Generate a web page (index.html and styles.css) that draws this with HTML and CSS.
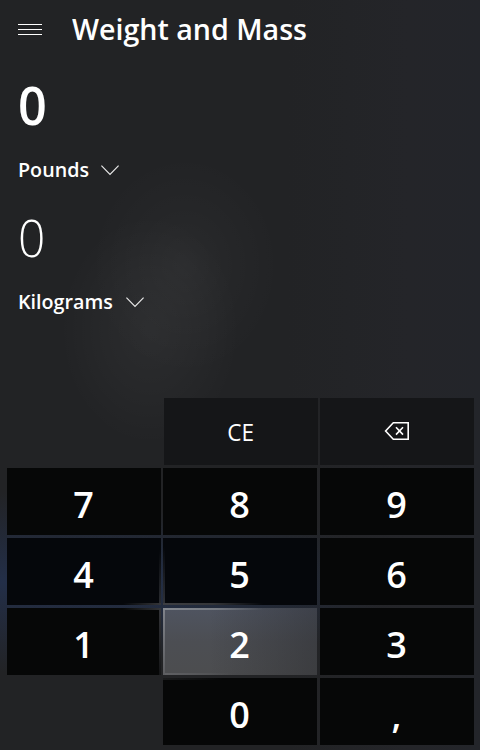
FILE: index.html
```html
<!DOCTYPE html>
<html lang="en">
<head>
<meta charset="utf-8">
<title>Calculator</title>
<link rel="stylesheet" href="styles.css">
</head>
<body>
<main class="converter">
  <header class="header">
    <svg class="menu" width="24" height="12" viewBox="0 0 24 12" shape-rendering="crispEdges"><path d="M0 .5h24M0 5.5h24M0 10.5h24"/></svg>
    <h1 class="title"><span class="fit">Weight and Mass</span></h1>
  </header>
  <section class="fields">
    <div class="value value-active"><span class="fit">0</span></div>
    <div class="unit"><span class="unit-name pounds"><span class="fit">Pounds</span></span><svg class="chevron" width="18" height="11" viewBox="0 0 18 11"><path d="M.4 .6L9 9.4L17.6 .6"/></svg></div>
    <div class="value value-light"><span class="fit">0</span></div>
    <div class="unit"><span class="unit-name kilograms"><span class="fit">Kilograms</span></span><svg class="chevron" width="18" height="11" viewBox="0 0 18 11"><path d="M.4 .6L9 9.4L17.6 .6"/></svg></div>
  </section>
  <section class="keypad">
    <div class="row tools">
      <button class="key tool"><span class="fit">CE</span></button>
      <button class="key tool back"><svg class="backspace" width="26" height="20" viewBox="0 0 26 20"><path d="M9.3 1.8H24.2V18.2H9.3L1.6 10Z"/><path d="M12 6.2L19 13.6M19 6.2L12 13.6"/></svg></button>
    </div>
    <div class="row"><button class="key">7</button><button class="key">8</button><button class="key">9</button></div>
    <div class="row"><button class="key blue glow-four">4</button><button class="key blue glow-five">5</button><button class="key">6</button></div>
    <div class="row"><button class="key glow-one">1</button><button class="key hover">2</button><button class="key">3</button></div>
    <div class="row last"><button class="key glow-zero">0</button><button class="key">,</button></div>
  </section>
</main>
</body>
</html>
```
FILE: styles.css
```css
* { box-sizing: border-box; }
body {
  margin: 0;
  color: #fff;
  font-family: "Open Sans", "Noto Sans", sans-serif;
  font-weight: 600;
}
.converter {
  width: 480px;
  height: 750px;
  display: flex;
  flex-direction: column;
  overflow: hidden;
  background:
    radial-gradient(ellipse 95px 110px at 185px 265px, rgba(255,255,255,.035), rgba(255,255,255,.017) 50%, transparent),
    radial-gradient(ellipse 90px 115px at 150px 330px, rgba(255,255,255,.045), rgba(255,255,255,.022) 50%, transparent),
    radial-gradient(ellipse 210px 90px at 0 582px, rgba(36,58,108,.5), transparent),
    radial-gradient(ellipse 190px 75px at 200px 585px, rgba(36,55,95,.55), transparent),
    linear-gradient(90deg, #222325 0 60%, #242529 85%, #23252a);
}
.fit { display: inline-block; transform-origin: 0 50%; white-space: nowrap; }
.header { height: 60px; flex: none; display: flex; align-items: center; padding-left: 18px; gap: 30px; }
.menu { stroke: #fff; fill: none; }
.title { margin: 0; font-size: 29px; font-weight: 600; line-height: 58px; padding-bottom: 2px; }
.title .fit { transform: scaleX(.986); }
.fields { height: 338px; flex: none; padding: 8px 0 0 18px; }
.value { height: 72px; font-size: 52px; line-height: 73px; }
.value-active .fit { transform: scaleX(.97); }
.value-light { font-weight: 300; }
.value-light .fit { transform: scaleX(.92); }
.unit { height: 60px; display: flex; align-items: center; gap: 13px; font-size: 20px; line-height: 60px; }
.unit .fit { transform: scale(.985, 1.03); }
.pounds { width: 70px; }
.kilograms { width: 95px; }
.chevron { fill: none; stroke: #e8e8e8; stroke-width: 1.2; }
.keypad { display: grid; grid-auto-rows: 67px; row-gap: 3px; padding-left: 7px; width: 474px; }
.row { display: grid; grid-template-columns: 154px 154px 154px; column-gap: 2px; }
.row .key:last-child { margin-left: 1px; margin-right: -1px; }
.tools { grid-template-columns: 154px 154px; padding-left: 157px; }
.tools .key:last-child { margin: 0; }
.last { grid-template-columns: 154px 154px; padding-left: 156px; }
.key {
  display: flex;
  align-items: center;
  justify-content: center;
  padding: 6px 1px 0 0;
  border: 0;
  border-radius: 0;
  color: #fff;
  background: #060707;
  font: inherit;
  font-size: 36px;
  line-height: 50px;
}
.tool { background: #151618; font-size: 23px; font-weight: 400; padding-top: 1px; }
.back { padding: 0 0 1px; }
.tool .fit { transform: scaleX(.98); transform-origin: 50% 50%; }
.backspace { fill: none; stroke: #fff; stroke-width: 1.6; }
.blue { background: #05070b; }
.glow-four {
  background:
    linear-gradient(90deg, transparent, #343538) 100% 100% / 38px 2px no-repeat,
    linear-gradient(transparent, #2b2d32) 100% 100% / 2px 55px no-repeat,
    #05070b;
}
.glow-five {
  background:
    linear-gradient(90deg, #3d3e42, #343538 50%, transparent) 0 100% / 100px 2px no-repeat,
    linear-gradient(transparent, #303238) 0 100% / 2px 58px no-repeat,
    #05070b;
}
.glow-one {
  background:
    linear-gradient(90deg, transparent, #343538) 100% 0 / 38px 2px no-repeat,
    linear-gradient(#333438, #151617) 100% 0 / 2px 100% no-repeat,
    #060707;
}
.glow-zero { background: linear-gradient(90deg, #1a1b1c, transparent) 0 0 / 60px 2px no-repeat, #060707; }
.hover {
  background:
    linear-gradient(90deg, #858990, #777b83 35%, transparent 65%) 0 0 / 100% 2px no-repeat,
    linear-gradient(#80838a, #5c5d60) 0 0 / 2px 100% no-repeat,
    linear-gradient(90deg, #606164, transparent 45%) 0 100% / 100% 2px no-repeat,
    linear-gradient(90deg, transparent 30%, rgba(35,36,40,.4)),
    linear-gradient(#4f5460, #4c4e53 50%, #4c4d4f);
}
```
